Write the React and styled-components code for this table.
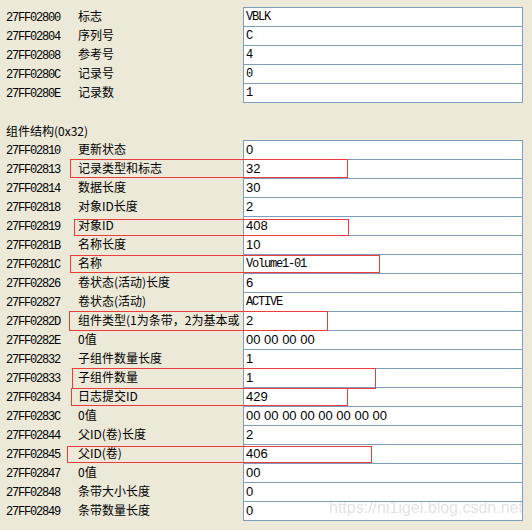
import React from "react";
import styled, { createGlobalStyle } from "styled-components";

const GlobalStyle = createGlobalStyle`
  html, body {
    margin: 0;
    padding: 0;
    background: #ece9d8;
  }
`;

const header = [
  ["27FF02800", "标志", "VBLK"],
  ["27FF02804", "序列号", "C"],
  ["27FF02808", "参考号", "4"],
  ["27FF0280C", "记录号", "0"],
  ["27FF0280E", "记录数", "1"],
];

// mark = red annotation box drawn over the row: [left, width, top, height]
const component = [
  { addr: "27FF02810", label: "更新状态", value: "0" },
  { addr: "27FF02813", label: "记录类型和标志", value: "32", mark: [70, 278, -1, 19] },
  { addr: "27FF02814", label: "数据长度", value: "30" },
  { addr: "27FF02818", label: "对象ID长度", value: "2" },
  { addr: "27FF02819", label: "对象ID", value: "408", mark: [74, 275, 2, 17] },
  { addr: "27FF0281B", label: "名称长度", value: "10" },
  { addr: "27FF0281C", label: "名称", value: "Volume1-01", mono: true, mark: [70, 310, 0, 18] },
  { addr: "27FF02826", label: "卷状态(活动)长度", value: "6" },
  { addr: "27FF02827", label: "卷状态(活动)", value: "ACTIVE", mono: true },
  { addr: "27FF0282D", label: "组件类型(1为条带，2为基本或", value: "2", mark: [69, 259, -1, 20] },
  { addr: "27FF0282E", label: "0值", value: "00 00 00 00" },
  { addr: "27FF02832", label: "子组件数量长度", value: "1" },
  { addr: "27FF02833", label: "子组件数量", value: "1", mark: [72, 304, -1, 21] },
  { addr: "27FF02834", label: "日志提交ID", value: "429", mark: [71, 277, 0, 18] },
  { addr: "27FF0283C", label: "0值", value: "00 00 00 00 00 00 00 00" },
  { addr: "27FF02844", label: "父ID(卷)长度", value: "2" },
  { addr: "27FF02845", label: "父ID(卷)", value: "406", mark: [67, 305, 1, 17] },
  { addr: "27FF02847", label: "0值", value: "00" },
  { addr: "27FF02848", label: "条带大小长度", value: "0" },
  { addr: "27FF02849", label: "条带数量长度", value: "0" },
];

const Page = styled.div`
  position: relative;
  width: 532px;
  height: 530px;
  overflow: hidden;
  padding-top: 8px;
  box-sizing: border-box;
  background: #ece9d8;
  color: #000;
`;

const Table = styled.div`
  display: flex;
  flex-direction: column;
`;

const Row = styled.div`
  position: relative;
  display: grid;
  grid-template-columns: 78px 165px 280px;
  height: 19px;
`;

const Addr = styled.div`
  padding: 2px 0 0 6px;
  font-family: "Liberation Mono", monospace;
  font-size: 12px;
  letter-spacing: -1.2px;
  line-height: 17px;
  white-space: nowrap;
`;

const Label = styled.div`
  margin-top: -1px;
  font-family: "Noto Sans CJK SC", sans-serif;
  font-size: 12px;
  line-height: 17px;
  white-space: nowrap;
  overflow: hidden;
`;

const Value = styled.div`
  box-sizing: border-box;
  height: 20px;
  margin-top: -1px;
  padding-left: 2px;
  background: #fff;
  border: 1px solid #7f9db9;
  font-family: ${(p) => (p.$mono ? '"Liberation Mono", monospace' : '"Liberation Sans", sans-serif')};
  font-size: ${(p) => (p.$mono ? "12px" : "13px")};
  letter-spacing: ${(p) => (p.$mono ? "-1.2px" : "0")};
  line-height: 18px;
  white-space: pre;
`;

const Mark = styled.div`
  position: absolute;
  z-index: 1;
  box-sizing: border-box;
  border: 1px solid #ec3c3c;
  pointer-events: none;
`;

const SectionTitle = styled.div`
  margin-top: 18px;
  height: 20px;
  padding-left: 6px;
  font-family: "Noto Sans CJK SC", sans-serif;
  font-size: 12px;
  line-height: 19px;
`;

const Watermark = styled.div`
  position: absolute;
  left: 329px;
  top: 499px;
  z-index: 2;
  font-family: "Liberation Sans", Arial, sans-serif;
  font-size: 16px;
  color: rgba(170, 170, 170, 0.35);
  white-space: nowrap;
`;

function DataRow({ addr, label, value, mono, mark }) {
  return (
    <Row>
      <Addr>{addr}</Addr>
      <Label>{label}</Label>
      <Value $mono={mono}>{value}</Value>
      {mark && (
        <Mark
          style={{ left: mark[0], width: mark[1], top: mark[2], height: mark[3] }}
        />
      )}
    </Row>
  );
}

export default function App() {
  return (
    <>
      <GlobalStyle />
      <Page>
        <Table>
          {header.map(([addr, label, value]) => (
            <DataRow key={addr} addr={addr} label={label} value={value} mono />
          ))}
        </Table>

        <SectionTitle>组件结构(0x32)</SectionTitle>

        <Table>
          {component.map((r) => (
            <DataRow key={r.addr} {...r} />
          ))}
        </Table>

        <Watermark>https://ni1igel.blog.csdn.net</Watermark>
      </Page>
    </>
  );
}
